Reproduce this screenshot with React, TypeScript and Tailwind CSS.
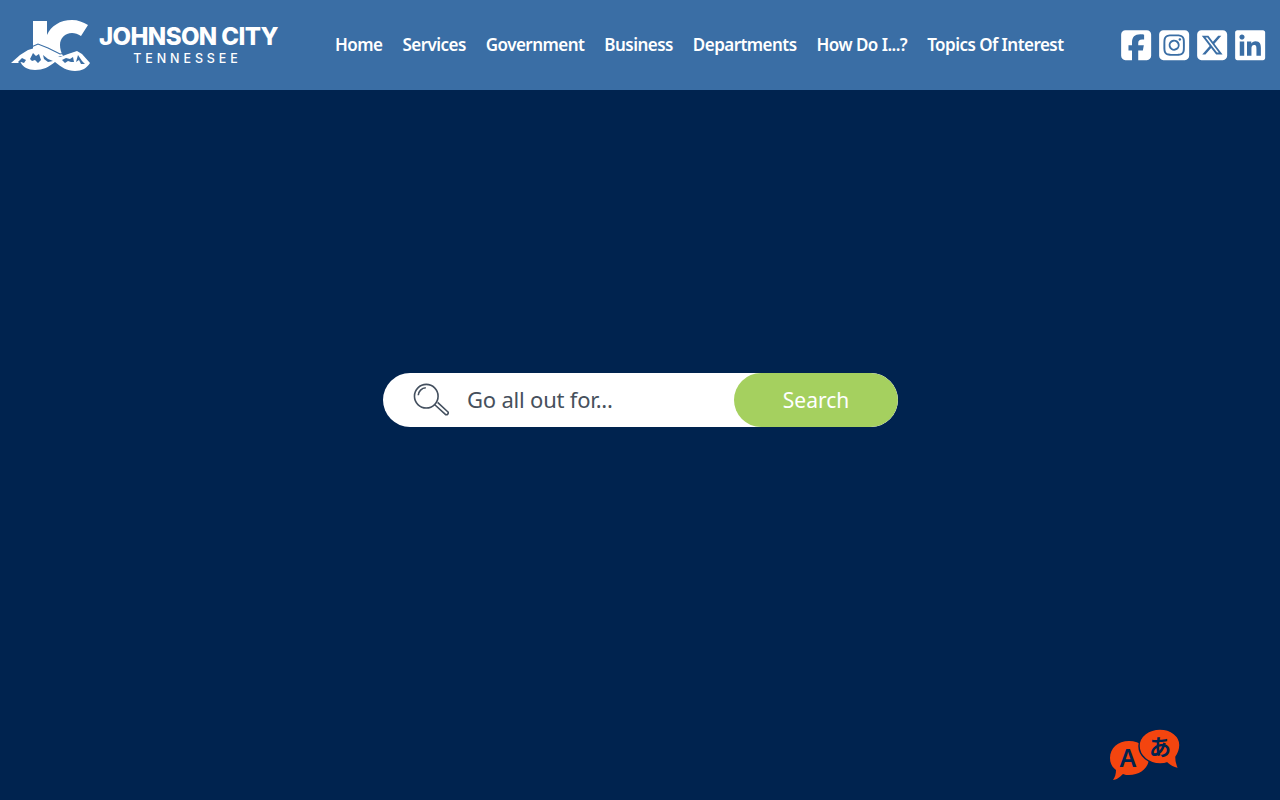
import { FaSquareFacebook, FaSquareInstagram, FaSquareXTwitter, FaLinkedin } from "react-icons/fa6";

const navItems = ["Home", "Services", "Government", "Business", "Departments", "How Do I...?", "Topics Of Interest"];

const socials = [FaSquareFacebook, FaSquareInstagram, FaSquareXTwitter, FaLinkedin];

const Logo = () => (
  <div className="flex items-center">
    <svg width="82" height="54" viewBox="0 0 82 54" className="shrink-0">
      {/* J and C */}
      <path
        fill="#fff"
        d="M23 3h14v14C41 8 50 2 62 2c6 0 11 2 16 5l-7 11c-3-2-6-3-9-3-7 0-12 5-12 12 0 4 1 7 3 11l-11 1-8-6-11 0z"
      />
      {/* mountains */}
      <path
        fill="#fff"
        d="M1 45l9-8 8-5 10-3 9 4 13 6 8-3 9-3 5 3 8 9c-3 5-8 8-15 8-8 0-14-4-20-9-6 5-12 8-20 8-7 0-12-3-14-7z"
      />
      <path fill="none" stroke="#3a6ea5" strokeWidth="1.1" d="M12 34l7-4 9-4 10 4 12 6 6-1" />
      <path
        fill="#3a6ea5"
        d="M8 44l4-4 4 2-2 3-3-1-1 2zM20 41l3-6 3 3 3-2 2 6-3 3-3-3-3 1zM33 37l5 4 5 2-5 1-4-3zM52 42l4-2 4 1 3-2 1 5-3 0-3-1-3 2zM68 37l4 6 3 3-4 0-2-4-3 2z"
      />
    </svg>
    <div className="ml-[7px] flex flex-col items-center pt-[1px]">
      <span className="font-['Inter',sans-serif] text-[24px] font-extrabold leading-[26px] tracking-[-0.6px] text-white whitespace-nowrap">
        JOHNSON CITY
      </span>
      <span className="mt-[1px] pr-[2px] font-['Inter',sans-serif] text-[12.5px] font-medium leading-[16px] tracking-[3.9px] text-white">
        TENNESSEE
      </span>
    </div>
  </div>
);

const TranslateIcon = () => (
  <svg width="72" height="52" viewBox="0 0 72 52" className="block">
    <path fill="#f4450f" d="M20 12c11 0 20 7 20 17s-9 17-20 17c-2 0-4 0-6-1-3 3-7 6-10 6 2-3 3-6 3-10-4-3-6-7-6-12 0-10 8-17 19-17z" />
    <path fill="#f4450f" stroke="#00234f" strokeWidth="1.5" d="M51 0c11 0 20 7 20 16 0 5-2 9-4 12 0 4 1 8 3 12-4-1-9-3-12-6-2 1-5 1-7 1-11 0-21-8-21-18S40 0 51 0z" />
    <text x="19" y="38" textAnchor="middle" fontFamily="'Noto Sans'" fontWeight="600" fontSize="25" fill="#00234f">A</text>
    <text x="51" y="26" textAnchor="middle" fontFamily="'Noto Sans CJK JP'" fontWeight="700" fontSize="22" fill="#00234f">あ</text>
  </svg>
);

export default function App() {
  return (
    <div className="flex min-h-[800px] flex-col bg-[#00234f] font-['Noto_Sans',sans-serif]">
      <header className="flex h-[90px] items-center bg-[#3a6ea5] pl-[10px] pr-[13px]">
        <Logo />
        <nav className="ml-[57px] flex gap-[20px]">
          {navItems.map((item) => (
            <a key={item} className="text-[17px] font-semibold tracking-[-0.54px] text-white whitespace-nowrap">
              {item}
            </a>
          ))}
        </nav>
        <div className="ml-auto flex items-center gap-[3.7px]">
          {socials.map((Icon, i) => (
            <Icon key={i} size={34.3} className="text-white" />
          ))}
        </div>
      </header>

      <main className="relative flex flex-1 items-center justify-center pb-[90px]">
        <div className="ml-[1px] flex h-[54px] w-[515px] items-center overflow-hidden rounded-full bg-white">
          <svg width="36" height="34" viewBox="0 0 38 36" className="ml-[30px] shrink-0" fill="none" stroke="#44505f" strokeWidth="1.7">
            <circle cx="14" cy="14" r="12.5" />
            <path d="M5.5 13a8.5 8.5 0 0 1 8-8" />
            <path d="M23 23l11.5 10.5a2 2 0 0 0 2.5-2.8L26 20.5" strokeLinejoin="round" />
          </svg>
          <span className="ml-[18px] flex-1 pb-[2px] text-[22px] tracking-[-0.2px] text-[#46505c]">Go all out for...</span>
          <button className="flex h-[54px] w-[164px] items-center justify-center rounded-full bg-[#a5d05f] pt-[1px] text-[21px] text-white">
            Search
          </button>
        </div>
        <div className="absolute bottom-[19px] left-[1109px]">
          <TranslateIcon />
        </div>
      </main>
    </div>
  );
}
